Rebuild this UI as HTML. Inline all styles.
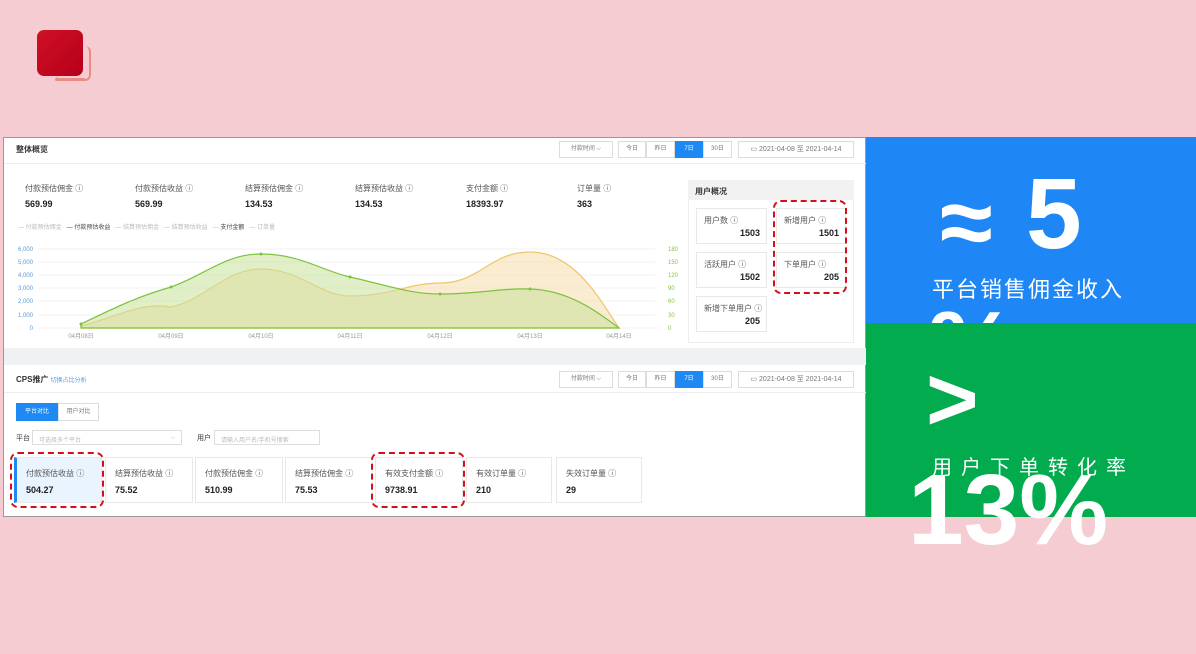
<!DOCTYPE html>
<html><head><meta charset="utf-8"><style>
*{margin:0;padding:0;box-sizing:border-box}
body{width:1196px;height:654px;background:#f6ccd3;position:relative;overflow:hidden;font-family:"Liberation Sans","Noto Sans CJK SC",sans-serif;color:#333}
.a{position:absolute;white-space:nowrap}
.s{font-size:8px;color:#555}
.v{font-size:9px;font-weight:bold;color:#222}
.card{position:absolute;border:1px solid #e8e8e8;background:#fff}
.btn{position:absolute;border:1px solid #ddd;background:#fff;font-size:6px;color:#777;text-align:center;line-height:15px;height:17px}
.dash{position:absolute;border:2px dashed #d40f1c;border-radius:8px}
</style></head><body>
<div class="a" style="left:37px;top:30px;width:46px;height:46px;border-radius:7px;background:linear-gradient(135deg,#d01025,#b5001a)"></div>
<div class="a" style="left:56px;top:46px;width:35px;height:35px;border-radius:6px;border:2px solid #ec8a85;border-top:none;border-left:none"></div>
<div class="a" style="left:55px;top:78px;width:30px;height:3px;border-radius:2px;background:#ec8a85"></div>

<div class="a" style="left:3px;top:137px;width:863px;height:380px;background:#fff;border:1px solid #999"></div>
<div class="a" style="left:4px;top:163px;width:862px;height:1px;background:#eee"></div>
<div class="a" style="left:16px;top:144px;font-size:8px;font-weight:bold">整体概览</div>
<div class="btn" style="left:559px;top:141px;width:54px">付款时间 ⌵</div>
<div class="btn" style="left:618px;top:141px;width:28px">今日</div>
<div class="btn" style="left:646px;top:141px;width:29px">昨日</div>
<div class="btn" style="left:675px;top:141px;width:28px;background:#1e88f3;color:#fff;border-color:#1e88f3">7日</div>
<div class="btn" style="left:703px;top:141px;width:29px">30日</div>
<div class="btn" style="left:738px;top:141px;width:116px;font-size:7px">▭ 2021-04-08 至 2021-04-14</div>

<div class="a s" style="left:25px;top:183px">付款预估佣金 ⓘ</div><div class="a v" style="left:25px;top:199px">569.99</div>
<div class="a s" style="left:135px;top:183px">付款预估收益 ⓘ</div><div class="a v" style="left:135px;top:199px">569.99</div>
<div class="a s" style="left:245px;top:183px">结算预估佣金 ⓘ</div><div class="a v" style="left:245px;top:199px">134.53</div>
<div class="a s" style="left:355px;top:183px">结算预估收益 ⓘ</div><div class="a v" style="left:355px;top:199px">134.53</div>
<div class="a s" style="left:466px;top:183px">支付金额 ⓘ</div><div class="a v" style="left:466px;top:199px">18393.97</div>
<div class="a s" style="left:577px;top:183px">订单量 ⓘ</div><div class="a v" style="left:577px;top:199px">363</div>
<div class="a" style="left:18px;top:222px;font-size:6px;color:#bbb">— 付款预估佣金 &nbsp; <span style="color:#444">— 付款预估收益</span> &nbsp; — 结算预估佣金 &nbsp; — 结算预估收益 &nbsp; <span style="color:#444"><span style="color:#e8b84a">—</span> 支付金额</span> &nbsp; — 订单量</div>

<svg class="a" style="left:0;top:240px" width="690" height="105" font-family="Liberation Sans" font-size="6">
<g stroke="#f0f0f0" stroke-width="1"><line x1="38" y1="9" x2="655" y2="9"/><line x1="38" y1="22" x2="655" y2="22"/><line x1="38" y1="35" x2="655" y2="35"/><line x1="38" y1="48" x2="655" y2="48"/><line x1="38" y1="61" x2="655" y2="61"/><line x1="38" y1="75" x2="655" y2="75"/><line x1="38" y1="88" x2="655" y2="88"/></g>
<g fill="#5a9bd6" text-anchor="end"><text x="33" y="11">6,000</text><text x="33" y="24">5,000</text><text x="33" y="37">4,000</text><text x="33" y="50">3,000</text><text x="33" y="63">2,000</text><text x="33" y="77">1,000</text><text x="33" y="90">0</text></g>
<g fill="#8bc34a"><text x="668" y="11">180</text><text x="668" y="24">150</text><text x="668" y="37">120</text><text x="668" y="50">90</text><text x="668" y="63">60</text><text x="668" y="77">30</text><text x="668" y="90">0</text></g>
<path d="M81 86 C120 76,140 62,171 67 C205 60,225 29,261 29 C300 29,320 56,350 56 C390 56,410 43,440 43 C480 43,490 12,530 12 C575 12,600 60,619 88 L619 88 L81 88Z" fill="#f6dfb0" fill-opacity=".6" stroke="#efc56a" stroke-width="1.2"/>
<path d="M81 84 C120 65,140 56,171 47 C205 35,225 14,261 14 C300 14,320 30,350 37 C390 46,410 54,440 54 C480 54,500 48,530 49 C570 50,600 74,619 88 L81 88Z" fill="#c8e29a" fill-opacity=".55" stroke="#7cc23e" stroke-width="1.2"/>
<g fill="#7cc23e"><circle cx="81" cy="84" r="1.5"/><circle cx="171" cy="47" r="1.5"/><circle cx="261" cy="14" r="1.5"/><circle cx="350" cy="37" r="1.5"/><circle cx="440" cy="54" r="1.5"/><circle cx="530" cy="49" r="1.5"/></g>
<g fill="#999" text-anchor="middle"><text x="81" y="98">04月08日</text><text x="171" y="98">04月09日</text><text x="261" y="98">04月10日</text><text x="350" y="98">04月11日</text><text x="440" y="98">04月12日</text><text x="530" y="98">04月13日</text><text x="619" y="98">04月14日</text></g>
</svg>

<div class="a" style="left:688px;top:180px;width:166px;height:163px;border:1px solid #eee"></div>
<div class="a" style="left:688px;top:180px;width:166px;height:20px;background:#f2f2f2;font-size:8px;font-weight:bold;padding:6px 7px">用户概况</div>
<div class="card" style="left:696px;top:208px;width:71px;height:36px"><div class="a s" style="left:7px;top:6px">用户数 ⓘ</div><div class="a v" style="right:6px;top:19px">1503</div></div>
<div class="card" style="left:776px;top:208px;width:70px;height:36px"><div class="a s" style="left:7px;top:6px">新增用户 ⓘ</div><div class="a v" style="right:6px;top:19px">1501</div></div>
<div class="card" style="left:696px;top:252px;width:71px;height:36px"><div class="a s" style="left:7px;top:6px">活跃用户 ⓘ</div><div class="a v" style="right:6px;top:19px">1502</div></div>
<div class="card" style="left:776px;top:252px;width:70px;height:36px"><div class="a s" style="left:7px;top:6px">下单用户 ⓘ</div><div class="a v" style="right:6px;top:19px">205</div></div>
<div class="card" style="left:696px;top:296px;width:71px;height:36px"><div class="a s" style="left:7px;top:6px">新增下单用户 ⓘ</div><div class="a v" style="right:6px;top:19px">205</div></div>
<div class="dash" style="left:773px;top:200px;width:74px;height:94px"></div>

<div class="a" style="left:4px;top:348px;width:862px;height:17px;background:#f0f1f4"></div>
<div class="a" style="left:4px;top:392px;width:862px;height:1px;background:#eee"></div>
<div class="a" style="left:16px;top:374px;font-size:8px;font-weight:bold">CPS推广 <span style="font-weight:normal;font-size:6px;color:#5a9bd6">切换占比分析</span></div>
<div class="btn" style="left:559px;top:371px;width:54px">付款时间 ⌵</div>
<div class="btn" style="left:618px;top:371px;width:28px">今日</div>
<div class="btn" style="left:646px;top:371px;width:29px">昨日</div>
<div class="btn" style="left:675px;top:371px;width:28px;background:#1e88f3;color:#fff;border-color:#1e88f3">7日</div>
<div class="btn" style="left:703px;top:371px;width:29px">30日</div>
<div class="btn" style="left:738px;top:371px;width:116px;font-size:7px">▭ 2021-04-08 至 2021-04-14</div>
<div class="btn" style="left:16px;top:403px;width:42px;height:18px;background:#1e88f3;color:#fff;border-color:#1e88f3;line-height:16px">平台对比</div>
<div class="btn" style="left:58px;top:403px;width:41px;height:18px;line-height:16px">用户对比</div>
<div class="a" style="left:16px;top:433px;font-size:7px">平台</div>
<div class="a" style="left:32px;top:430px;width:150px;height:15px;border:1px solid #ddd;font-size:6px;color:#bbb;padding:4px 6px">可选择多个平台<span style="float:right">⌵</span></div>
<div class="a" style="left:197px;top:433px;font-size:7px">用户</div>
<div class="a" style="left:214px;top:430px;width:106px;height:15px;border:1px solid #ddd;font-size:6px;color:#bbb;padding:4px 6px">请输入用户名/手机号搜索</div>
<div class="card" style="left:14px;top:457px;width:88px;height:46px;background:#eaf4ff;border-left:3px solid #1e88f3"><div class="a s" style="left:9px;top:10px">付款预估收益 ⓘ</div><div class="a v" style="left:9px;top:27px">504.27</div></div>
<div class="card" style="left:105px;top:457px;width:88px;height:46px"><div class="a s" style="left:9px;top:10px">结算预估收益 ⓘ</div><div class="a v" style="left:9px;top:27px">75.52</div></div>
<div class="card" style="left:195px;top:457px;width:88px;height:46px"><div class="a s" style="left:9px;top:10px">付款预估佣金 ⓘ</div><div class="a v" style="left:9px;top:27px">510.99</div></div>
<div class="card" style="left:285px;top:457px;width:88px;height:46px"><div class="a s" style="left:9px;top:10px">结算预估佣金 ⓘ</div><div class="a v" style="left:9px;top:27px">75.53</div></div>
<div class="card" style="left:375px;top:457px;width:88px;height:46px"><div class="a s" style="left:9px;top:10px">有效支付金额 ⓘ</div><div class="a v" style="left:9px;top:27px">9738.91</div></div>
<div class="card" style="left:466px;top:457px;width:86px;height:46px"><div class="a s" style="left:9px;top:10px">有效订单量 ⓘ</div><div class="a v" style="left:9px;top:27px">210</div></div>
<div class="card" style="left:556px;top:457px;width:86px;height:46px"><div class="a s" style="left:9px;top:10px">失效订单量 ⓘ</div><div class="a v" style="left:9px;top:27px">29</div></div>
<div class="dash" style="left:10px;top:452px;width:94px;height:56px"></div>
<div class="dash" style="left:371px;top:452px;width:94px;height:56px"></div>

<div class="a" style="left:866px;top:137px;width:330px;height:186px;background:#1f87f5;overflow:hidden">
<div class="a" style="left:74px;top:38px;font-size:96px;font-weight:bold;color:#fff;line-height:96px">≈</div>
<div class="a" style="left:160px;top:27px;font-size:100px;font-weight:bold;color:#fff;line-height:100px">5</div>
<div class="a" style="left:62px;top:160px;font-size:100px;font-weight:bold;color:#fff;line-height:100px">%</div>
</div>
<div class="a" style="left:932px;top:272px;font-size:22px;color:#fff;letter-spacing:2px;font-family:'Noto Sans CJK SC',sans-serif">平台销售佣金收入</div>
<div class="a" style="left:866px;top:323px;width:330px;height:194px;background:#02ab4d"></div>
<div class="a" style="left:926px;top:350px;font-size:90px;font-weight:bold;color:#fff;line-height:100px">&gt;</div>
<div class="a" style="left:932px;top:451px;font-size:20px;color:#fff;letter-spacing:9px;font-family:'Noto Sans CJK SC',sans-serif">用户下单转化率</div>
<div class="a" style="left:908px;top:460px;font-size:100px;font-weight:bold;color:#fff;line-height:100px">13%</div>
</body></html>
